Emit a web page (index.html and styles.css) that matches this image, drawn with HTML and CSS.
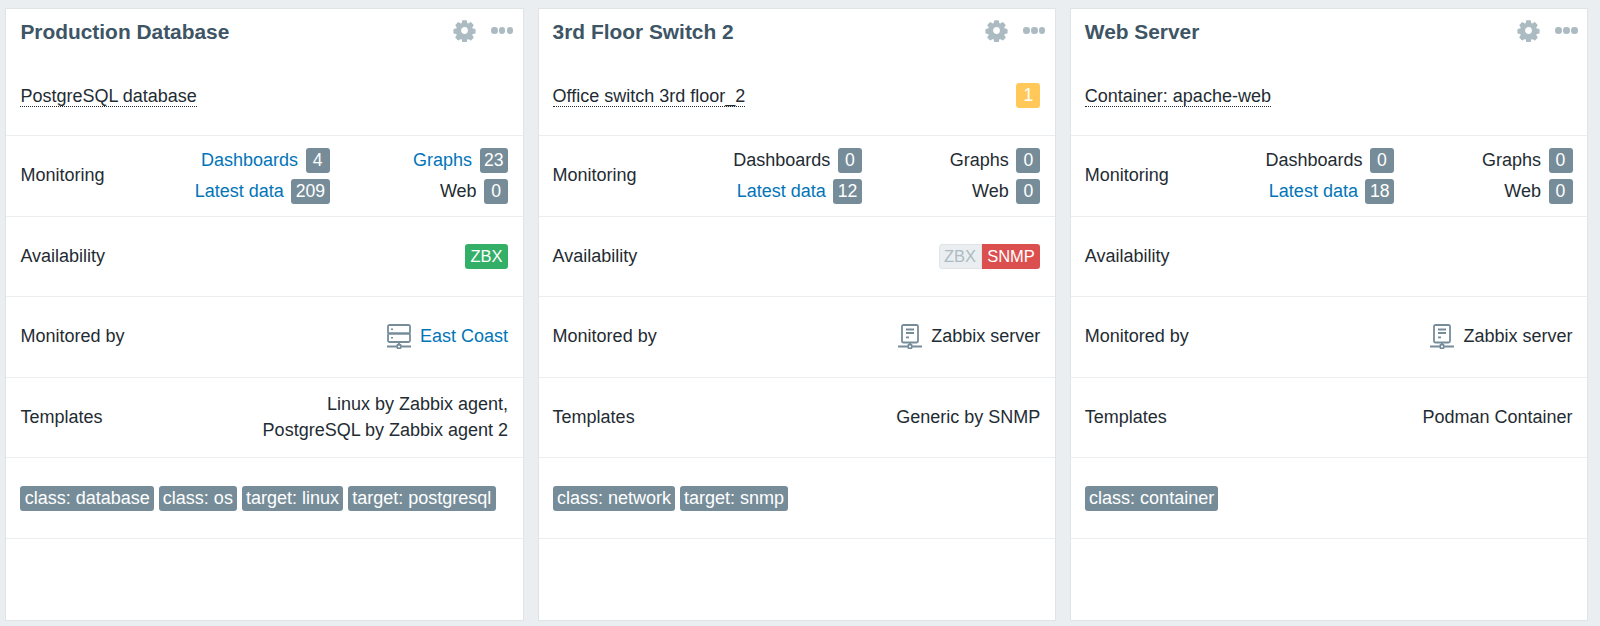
FILE: index.html
```html
<!DOCTYPE html>
<html lang="en">
<head>
<meta charset="utf-8">
<title>Hosts</title>
<link rel="stylesheet" href="styles.css">
</head>
<body>
<svg class="defs" width="0" height="0" aria-hidden="true">
  <symbol id="gear" viewBox="0 0 24 24"><path fill-rule="evenodd" stroke="currentColor" stroke-width="1.500" stroke-linejoin="round" d="M10.300 2h3.400l.6 2.800 1.700.7 2.400-1.500 2.400 2.400-1.500 2.400.7 1.700 2.800.6v3.400l-2.800.6-.7 1.700 1.500 2.400-2.400 2.400-2.400-1.500-1.700.7-.6 2.800h-3.400l-.6-2.800-1.700-.7-2.400 1.500-2.400-2.400 1.500-2.400-.7-1.700-2.800-.6v-3.400l2.800-.6.7-1.700-1.500-2.400 2.400-2.400 2.400 1.500 1.700-.7zM12 7.700a4.300 4.300 0 1 0 0 8.600 4.300 4.300 0 0 0 0-8.600z"/></symbol>
  <symbol id="proxy" viewBox="0 0 24 25"><g fill="none" stroke="currentColor" stroke-width="1.800"><rect x="1" y="1" width="22" height="8.500" rx="1.500"/><rect x="1" y="9.500" width="22" height="8.500" rx="1.500"/><path d="M12 18v3.500M0 22.500h9.500M14.500 22.500H24"/><circle cx="12" cy="22.500" r="2"/></g><path fill="currentColor" d="M4 4.500h2v1.500H4zM4 13h2v1.500H4z"/></symbol>
  <symbol id="server" viewBox="0 0 24 25"><g fill="none" stroke="currentColor" stroke-width="1.800"><rect x="4" y="1" width="16" height="17.500" rx="1.500"/><path d="M12 18.500v2M0 22.500h9.500M14.500 22.500H24M8 5.500h8M8 9h8"/><circle cx="12" cy="22.500" r="2"/></g><path fill="currentColor" d="M8 12.500h3v1.800H8z"/></symbol>
</svg>
<main class="board">

  <section class="card">
    <header class="card-head">
      <h2 class="title">Production Database</h2>
      <div class="actions">
        <svg class="gear"><use href="#gear"/></svg>
        <span class="dots"><i></i><i></i><i></i></span>
      </div>
    </header>
    <div class="desc"><span class="hint">PostgreSQL database</span></div>
    <div class="row">
      <span>Monitoring</span>
      <div class="stats">
        <div class="stat"><a href="#">Dashboards</a><b class="badge">4</b></div>
        <div class="stat"><a href="#">Graphs</a><b class="badge">23</b></div>
        <div class="stat"><a href="#">Latest data</a><b class="badge">209</b></div>
        <div class="stat"><span>Web</span><b class="badge">0</b></div>
      </div>
    </div>
    <div class="row"><span>Availability</span><div class="avail"><b class="st green">ZBX</b></div></div>
    <div class="row"><span>Monitored by</span><div class="mon"><svg class="ico"><use href="#proxy"/></svg><a href="#">East Coast</a></div></div>
    <div class="row"><span>Templates</span><div class="tpl">Linux by Zabbix agent,<br>PostgreSQL by Zabbix agent 2</div></div>
    <div class="row tags"><b class="tag">class: database</b><b class="tag">class: os</b><b class="tag">target: linux</b><b class="tag">target: postgresql</b></div>
  </section>

  <section class="card">
    <header class="card-head">
      <h2 class="title">3rd Floor Switch 2</h2>
      <div class="actions">
        <svg class="gear"><use href="#gear"/></svg>
        <span class="dots"><i></i><i></i><i></i></span>
      </div>
    </header>
    <div class="desc"><span class="hint">Office switch 3rd floor_2</span><b class="badge warn">1</b></div>
    <div class="row">
      <span>Monitoring</span>
      <div class="stats">
        <div class="stat"><span>Dashboards</span><b class="badge">0</b></div>
        <div class="stat"><span>Graphs</span><b class="badge">0</b></div>
        <div class="stat"><a href="#">Latest data</a><b class="badge">12</b></div>
        <div class="stat"><span>Web</span><b class="badge">0</b></div>
      </div>
    </div>
    <div class="row"><span>Availability</span><div class="avail"><b class="st gray">ZBX</b><b class="st red">SNMP</b></div></div>
    <div class="row"><span>Monitored by</span><div class="mon"><svg class="ico"><use href="#server"/></svg><span>Zabbix server</span></div></div>
    <div class="row"><span>Templates</span><div class="tpl">Generic by SNMP</div></div>
    <div class="row tags"><b class="tag">class: network</b><b class="tag">target: snmp</b></div>
  </section>

  <section class="card">
    <header class="card-head">
      <h2 class="title">Web Server</h2>
      <div class="actions">
        <svg class="gear"><use href="#gear"/></svg>
        <span class="dots"><i></i><i></i><i></i></span>
      </div>
    </header>
    <div class="desc"><span class="hint">Container: apache-web</span></div>
    <div class="row">
      <span>Monitoring</span>
      <div class="stats">
        <div class="stat"><span>Dashboards</span><b class="badge">0</b></div>
        <div class="stat"><span>Graphs</span><b class="badge">0</b></div>
        <div class="stat"><a href="#">Latest data</a><b class="badge">18</b></div>
        <div class="stat"><span>Web</span><b class="badge">0</b></div>
      </div>
    </div>
    <div class="row"><span>Availability</span></div>
    <div class="row"><span>Monitored by</span><div class="mon"><svg class="ico"><use href="#server"/></svg><span>Zabbix server</span></div></div>
    <div class="row"><span>Templates</span><div class="tpl">Podman Container</div></div>
    <div class="row tags"><b class="tag">class: container</b></div>
  </section>

</main>
</body>
</html>
```
FILE: styles.css
```css
* { box-sizing: border-box; }
html, body { height: 100%; }
body {
  margin: 0;
  padding: 8px 12px 5px 5.400px;
  background: #ebeef0;
  color: #1f2c33;
  font: 18px/25.500px "Liberation Sans", Arial, sans-serif;
  overflow: hidden;
}
.defs { position: absolute; }
.board {
  display: grid;
  grid-template-columns: repeat(3, 1fr);
  gap: 14px;
  height: 100%;
}
.card {
  background: #fff;
  border: 1px solid #dfe4e7;
  display: flex;
  flex-direction: column;
}
.card-head {
  display: flex;
  justify-content: space-between;
  height: 47px;
  padding: 10px 9.500px 0 14px;
}
.title {
  margin: 0;
  font-size: 20.900px;
  line-height: 26px;
  font-weight: 700;
  color: #3d5565;
}
.actions { display: flex; align-items: flex-start; gap: 15.500px; }
.gear { width: 23px; height: 23px; color: #acbbc2; fill: #acbbc2; margin-top: -.500px; }
.dots { display: flex; gap: 1.300px; padding-top: 8px; }
.dots i { width: 6.500px; height: 6.500px; border-radius: 50%; background: #acbbc2; }
.desc {
  height: 80px;
  display: flex;
  justify-content: space-between;
  align-items: center;
  padding: 2px 14.500px 0 14px;
  border-bottom: 1px solid #ebeef0;
}
.hint { border-bottom: 1px dotted #1f2c33; line-height: 20px; }
.desc .warn { margin-top: -2px; }
.row {
  height: 80.600px;
  display: flex;
  justify-content: space-between;
  align-items: center;
  padding: 0 14.500px 0 14px;
  border-bottom: 1px solid #ebeef0;
}
.stats {
  width: 357px;
  display: grid;
  grid-template-columns: repeat(2, 1fr);
  row-gap: 5.500px;
}
.stat { display: flex; justify-content: flex-end; align-items: center; gap: 7.500px; }
a { color: #0275b8; text-decoration: none; }
.badge {
  min-width: 24px;
  height: 25px;
  padding: 0 4.500px;
  border-radius: 3px;
  background: #768d99;
  color: #fff;
  font-weight: 400;
  font-size: 17.600px;
  text-align: center;
  line-height: 25px;
}
.warn { background: #ffc859; }
.avail { display: flex; }
.st {
  height: 25px;
  padding: 0 5.500px;
  font-size: 16.500px;
  font-weight: 400;
  line-height: 24px;
  color: #fff;
  border-radius: 3px;
}
.green { background: #34af67; }
.gray { background: #ebeef0; color: #acbbc2; border: 1px solid #dfe4e7; border-radius: 3px 0 0 3px; padding: 0 4.500px; line-height: 22px; }
.red { background: #dc4f4f; border-radius: 0 3px 3px 0; }
.mon { display: flex; align-items: center; gap: 9px; }
.ico { width: 24px; height: 25px; color: #768d99; }
.tpl { text-align: right; }
.tags { justify-content: flex-start; gap: 4.500px; }
.tag {
  height: 25px;
  padding: 0 4.300px;
  border-radius: 3px;
  background: #768d99;
  color: #fff;
  font-weight: 400;
  line-height: 24px;
}
```
